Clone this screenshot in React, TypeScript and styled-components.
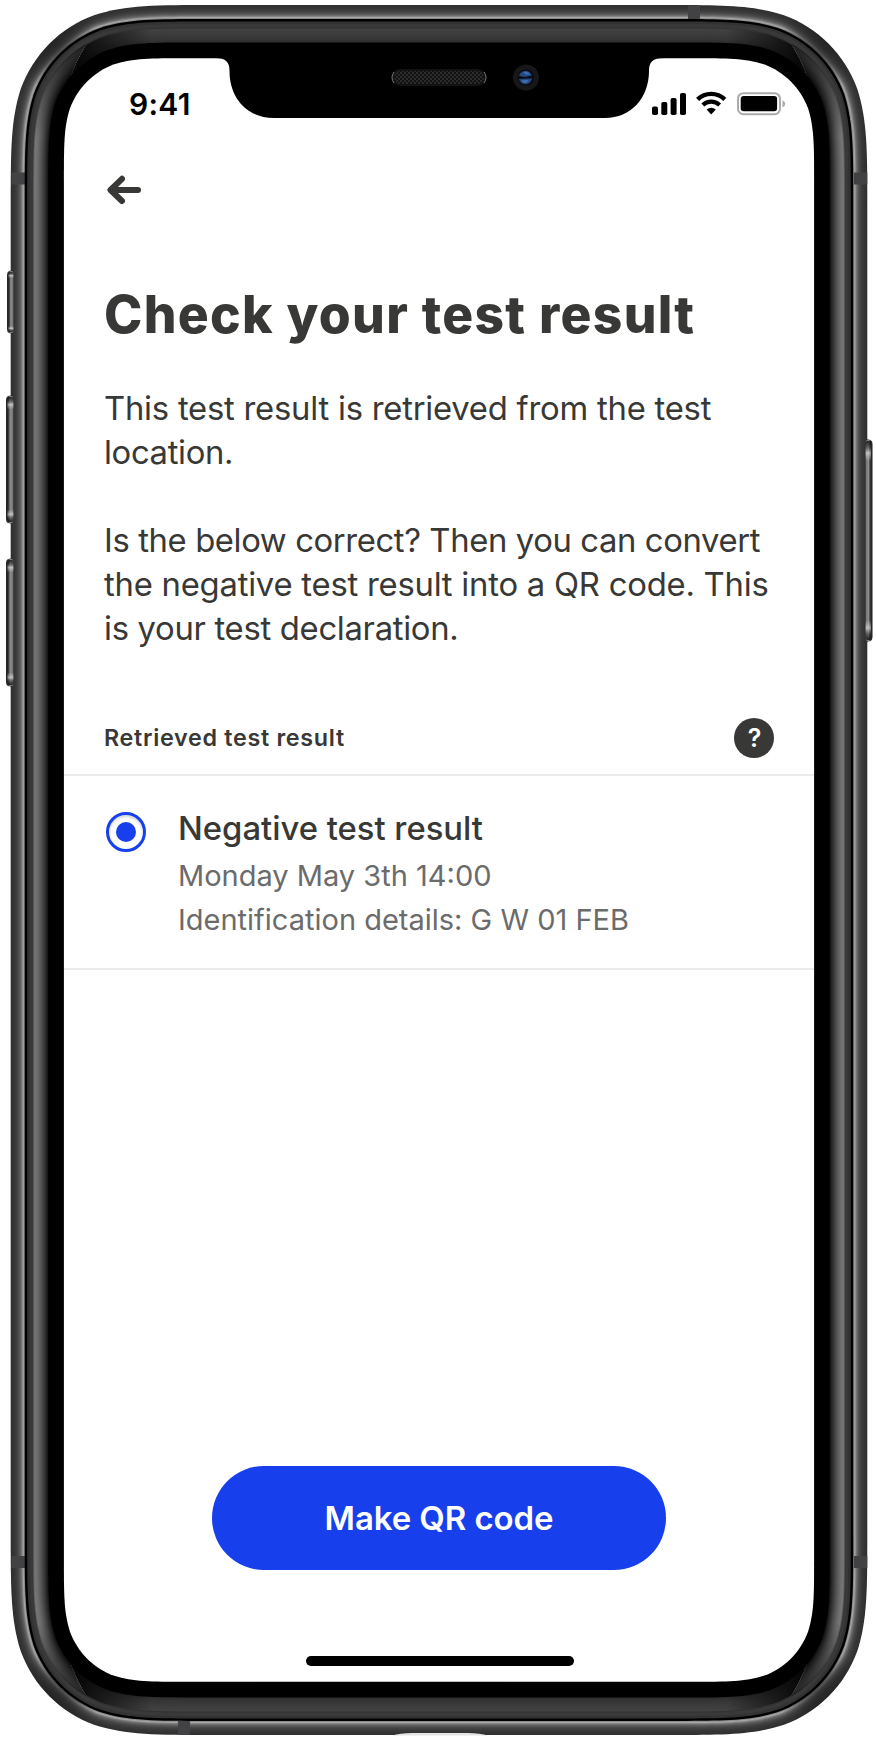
import React from "react";
import styled, { createGlobalStyle } from "styled-components";

const Global = createGlobalStyle`
  * { box-sizing: border-box; }
  body { margin: 0; background: #fff; font-family: Inter, "Liberation Sans", sans-serif; }
`;

const Device = styled.main`
  position: relative;
  width: 876px;
  height: 1740px;
  padding: 58px 62px 58px 64px;
  overflow: hidden;
`;

const FrameArt = styled.svg`
  position: absolute;
  inset: 0;
`;

const Screen = styled.div`
  position: relative;
  width: 750px;
  height: 1624px;
  display: flex;
  flex-direction: column;
`;

const StatusBar = styled.header`
  display: flex;
  justify-content: space-between;
  height: 88px;
  padding: 28px 28px 0 65px;
`;

const Clock = styled.time`
  font-size: 30px;
  font-weight: 600;
  line-height: 37px;
  letter-spacing: 0.3px;
  color: #000;
`;

const StatusIcons = styled.svg`
  display: block;
  margin-top: 4px;
`;

const NavBar = styled.nav`
  height: 88px;
  padding: 28px 0 0 42px;
`;

const BackButton = styled.button`
  display: block;
  padding: 0;
  border: 0;
  background: none;
`;

const Title = styled.h1`
  margin: 48px 0 0 40px;
  font-size: 51.6px;
  line-height: 64px;
  font-weight: 800;
  letter-spacing: 1.3px;
  color: #383836;
  white-space: nowrap;
`;

const Copy = styled.div`
  margin: 40px 0 0 40px;
  height: 264px;
`;

const Line = styled.span<{ $spacing: number }>`
  display: block;
  font-size: 32.8px;
  line-height: 44px;
  letter-spacing: ${(p) => p.$spacing}px;
  color: #383836;
  white-space: nowrap;
`;

const Gap = styled.div`
  height: 44px;
`;

const SectionHeader = styled.div`
  display: flex;
  align-items: center;
  justify-content: space-between;
  height: 76px;
  margin-top: 50px;
  padding: 2px 40px 0;
  border-bottom: 2px solid #ebebeb;
`;

const SectionLabel = styled.h2`
  margin: 0;
  font-size: 23.3px;
  line-height: 32px;
  font-weight: 600;
  letter-spacing: 0.7px;
  color: #383836;
`;

const ResultRow = styled.label`
  display: flex;
  height: 194px;
  padding: 31px 0 0 42px;
  border-bottom: 2px solid #ebebeb;
`;

const Radio = styled.span`
  display: flex;
  align-items: center;
  justify-content: center;
  width: 40px;
  height: 40px;
  margin: 5px 32px 0 0;
  border: 3px solid #173fec;
  border-radius: 50%;
  box-shadow: inset 0 2px 3px rgba(0, 0, 0, 0.18);

  &::after {
    content: "";
    width: 20px;
    height: 20px;
    border-radius: 50%;
    background: #173fec;
  }
`;

const ResultName = styled.strong`
  display: block;
  margin-bottom: 5px;
  font-size: 32.8px;
  line-height: 42px;
  font-weight: 500;
  letter-spacing: 0px;
  color: #383836;
`;

const Detail = styled.span`
  display: block;
  font-size: 29px;
  line-height: 44px;
  color: #6b6b6b;
  white-space: nowrap;
`;

const Footer = styled.footer`
  display: flex;
  flex: 1;
  flex-direction: column;
  align-items: center;
  justify-content: flex-end;
  padding-bottom: 16px;
`;

const PrimaryButton = styled.button`
  width: 454px;
  height: 104px;
  margin-bottom: 86px;
  padding: 0;
  border: 0;
  border-radius: 52px;
  background: #173fec;
  color: #fff;
  font: 600 33px/44px Inter, sans-serif;
  letter-spacing: -0.1px;
`;

const HomeIndicator = styled.div`
  width: 268px;
  height: 10px;
  margin-left: 2px;
  border-radius: 5px;
  background: #000;
`;

const LEFT = 10.7;
const TOP = 5;
const RIGHT = 867.3;
const BOTTOM = 1735;
const RADIUS = 133;

// Continuous-curvature rounded rectangle, inset from the outer edge of the casing.
function casing(inset: number) {
  const l = LEFT + inset;
  const t = TOP + inset;
  const r = RIGHT - inset;
  const b = BOTTOM - inset;
  const k = RADIUS - inset;
  const [s, c1, c2, m1, m2, n1, n2] = [1.5287, 1.0885, 0.8684, 0.0749, 0.6315, 0.1691, 0.3728].map((v) => v * k);
  return [
    `M${l + s} ${t} H${r - s}`,
    `C${r - c1} ${t} ${r - c2} ${t} ${r - m2} ${t + m1}`,
    `C${r - n2} ${t + n1} ${r - n1} ${t + n2} ${r - m1} ${t + m2}`,
    `C${r} ${t + c2} ${r} ${t + c1} ${r} ${t + s}`,
    `V${b - s}`,
    `C${r} ${b - c1} ${r} ${b - c2} ${r - m1} ${b - m2}`,
    `C${r - n1} ${b - n2} ${r - n2} ${b - n1} ${r - m2} ${b - m1}`,
    `C${r - c2} ${b} ${r - c1} ${b} ${r - s} ${b}`,
    `H${l + s}`,
    `C${l + c1} ${b} ${l + c2} ${b} ${l + m2} ${b - m1}`,
    `C${l + n2} ${b - n1} ${l + n1} ${b - n2} ${l + m1} ${b - m2}`,
    `C${l} ${b - c2} ${l} ${b - c1} ${l} ${b - s}`,
    `V${t + s}`,
    `C${l} ${t + c1} ${l} ${t + c2} ${l + m1} ${t + m2}`,
    `C${l + n1} ${t + n2} ${l + n2} ${t + n1} ${l + m2} ${t + m1}`,
    `C${l + c2} ${t} ${l + c1} ${t} ${l + s} ${t} Z`,
  ].join(" ");
}

const METAL = [48, 50, 52, 54, 57, 61, 66, 73, 82, 94, 110, 134, 166, 140];
const SIDE = [98, 118, 116, 112, 107, 101, 94, 87, 79, 71, 62, 53, 44, 34, 22];
const CAP = [50, 66, 65, 64, 63, 62, 61, 60, 58, 57, 55, 54, 52, 50, 46];
const grey = (v: number) => `rgb(${v},${v},${v})`;

const ANTENNAS = [
  [178, 1721, 12, 14],
  [688, 5.5, 12, 14.5],
  [11.5, 172.5, 14, 12],
  [854, 172.5, 13.3, 12],
  [11.5, 1556, 14, 12],
  [854, 1556, 13.3, 12],
];

const KEYS = [
  { x: 7, y: 269, w: 7, h: 66, right: false },
  { x: 6, y: 394, w: 8, h: 131, right: false },
  { x: 6, y: 557, w: 8, h: 131, right: false },
  { x: 865, y: 438, w: 7.5, h: 205, right: true },
];

function Casing() {
  return (
    <FrameArt width="876" height="1740" viewBox="0 0 876 1740" aria-hidden="true">
      <defs>
        <linearGradient id="key" x1="0" x2="1" y1="0" y2="0">
          <stop offset="0" stopColor="#1c1c1c" />
          <stop offset="0.25" stopColor="#444" />
          <stop offset="0.45" stopColor="#8c8c8c" />
          <stop offset="0.8" stopColor="#777" />
          <stop offset="1" stopColor="#222" />
        </linearGradient>
        <linearGradient id="keyEnds" x1="0" x2="0" y1="0" y2="1">
          <stop offset="0" stopColor="#000" stopOpacity="0.75" />
          <stop offset="0.03" stopColor="#222" stopOpacity="0.4" />
          <stop offset="0.06" stopColor="#fff" stopOpacity="0.5" />
          <stop offset="0.1" stopColor="#fff" stopOpacity="0" />
          <stop offset="0.9" stopColor="#fff" stopOpacity="0" />
          <stop offset="0.94" stopColor="#fff" stopOpacity="0.5" />
          <stop offset="0.97" stopColor="#222" stopOpacity="0.4" />
          <stop offset="1" stopColor="#000" stopOpacity="0.75" />
        </linearGradient>
        <linearGradient id="sideShade" x1="0" x2="0" y1="36" y2="1705" gradientUnits="userSpaceOnUse">
          <stop offset="0" stopColor="#000" stopOpacity="0.8" />
          <stop offset="0.06" stopColor="#000" stopOpacity="0" />
          <stop offset="0.95" stopColor="#000" stopOpacity="0" />
          <stop offset="1" stopColor="#000" stopOpacity="0.8" />
        </linearGradient>
        <linearGradient id="capShade" x1="80" x2="798" y1="0" y2="0" gradientUnits="userSpaceOnUse">
          <stop offset="0" stopColor="#000" stopOpacity="0.85" />
          <stop offset="0.1" stopColor="#000" stopOpacity="0" />
          <stop offset="0.9" stopColor="#000" stopOpacity="0" />
          <stop offset="1" stopColor="#000" stopOpacity="0.85" />
        </linearGradient>
        <radialGradient id="cornerShade">
          <stop offset="0" stopColor="#222" stopOpacity="0.8" />
          <stop offset="0.5" stopColor="#222" stopOpacity="0.5" />
          <stop offset="1" stopColor="#222" stopOpacity="0" />
        </radialGradient>
        <pattern id="mesh" width="4" height="4" patternUnits="userSpaceOnUse">
          <path d="M0 0h2v2h-2z M2 2h2v2h-2z" fill="#2b2b2b" />
        </pattern>
        <clipPath id="metalClip"><path d={casing(0)} /></clipPath>
        <clipPath id="sides">
          <path d="M0 0 L94 34 C70 64 54 110 54 200 V1540 C54 1630 70 1676 94 1706 L0 1740 Z M876 0 L784 34 C808 64 824 110 824 200 V1540 C824 1630 808 1676 784 1706 L876 1740 Z" />
        </clipPath>
      </defs>

      {KEYS.map((k) => (
        <g key={k.y} transform={k.right ? `translate(${k.x * 2 + k.w} 0) scale(-1 1)` : undefined}>
          <path d={`M${k.x + k.w} ${k.y} L${k.x + 2} ${k.y + 2} Q${k.x} ${k.y + 3} ${k.x} ${k.y + 6} V${k.y + k.h - 6} Q${k.x} ${k.y + k.h - 3} ${k.x + 2} ${k.y + k.h - 2} L${k.x + k.w} ${k.y + k.h} Z`} fill="url(#key)" />
        </g>
      ))}

      {METAL.map((v, i) => <path key={i} d={casing(i)} fill={grey(v)} />)}
      <g clipPath="url(#metalClip)">
        {[[52, 42], [826, 42], [52, 1698], [826, 1698]].map(([x, y]) => (
          <circle key={`${x}-${y}`} cx={x} cy={y} r="46" fill="url(#cornerShade)" />
        ))}
      </g>
      {ANTENNAS.map(([x, y, w, h]) => <rect key={`${x}-${y}`} x={x} y={y} width={w} height={h} fill="#424244" />)}
      <path d="M392 1735.5 Q400 1733 412 1733 H468 Q480 1733 488 1735.5 Z" fill="#e4e4e4" />
      {KEYS.map((k) => (
        <g key={k.y} transform={k.right ? `translate(${k.x * 2 + k.w} 0) scale(-1 1)` : undefined}>
          <rect x={k.x + 1} y={k.y + 2} width={k.w - 1} height={k.h - 4} rx="3" fill="url(#key)" />
          <rect x={k.x + 1.5} y={k.y + 3} width={k.w - 2} height={k.h - 6} rx="2" fill="url(#keyEnds)" />
        </g>
      ))}
      <path d={casing(14)} fill="#000" />
      <path d={casing(16.5)} fill="#323232" />
      <path d={casing(19)} fill="#393939" />
      {CAP.map((v, i) => <path key={i} d={casing(22.5 + i)} fill={grey(v)} />)}
      <path d={casing(23.5)} fill="url(#capShade)" />
      <g clipPath="url(#sides)">
        {SIDE.map((v, i) => <path key={i} d={casing(22.5 + i)} fill={grey(v)} />)}
        <path d={casing(22.5)} fill="url(#sideShade)" />
      </g>
      <path d={casing(37.5)} fill="#000" />
      <path d={casing(53.2)} fill="#fff" />
      <path d="M215 57 V58 C226 58 229.5 62 229.5 71 C229.5 98 247 118 274 118 H605 C631 118 649 98 649 71 C649 62 652.5 58 664 58 V57 Z" fill="#000" />

      <rect x="391.5" y="69" width="95" height="17" rx="8.5" fill="#121212" />
      <rect x="394" y="71" width="90" height="13" rx="6.5" fill="url(#mesh)" />
      <path d="M394 72 Q390 77.5 394 83 M484 72 Q488 77.5 484 83" stroke="#777" fill="none" />
      <circle cx="526" cy="77.5" r="13" fill="#171719" />
      <circle cx="526" cy="77.5" r="8" fill="#090a10" />
      <circle cx="525.5" cy="77.5" r="6.7" fill="#24487f" />
      <path d="M518.5 76 L525 77 L532.5 75.5 V78.5 H526 L518.5 79 Z" fill="#080b14" />
      <path d="M521 81 Q524 79 529 80.5 Q527 83.5 524 83 Z M523 72.5 Q527 70.5 530 74 Q526 76 523 72.5 Z" fill="#3e6cae" />
    </FrameArt>
  );
}

export default function App() {
  return (
    <>
      <Global />
      <Device>
        <Casing />
        <Screen>
          <StatusBar>
            <Clock>9:41</Clock>
            <StatusIcons width="134" height="28" viewBox="0 0 134 28" aria-label="Signal, Wi-Fi and battery">
              <rect x="0" y="16.5" width="6" height="8.5" rx="1.8" />
              <rect x="9.3" y="12" width="6" height="13" rx="1.8" />
              <rect x="18.6" y="8" width="6" height="17" rx="1.8" />
              <rect x="28" y="3" width="6" height="22" rx="1.8" />
              <path d="M45.6 9.4 A19.5 19.5 0 0 1 72.8 9.4" fill="none" stroke="#000" strokeWidth="4.4" />
              <path d="M50.8 15 A12.3 12.3 0 0 1 67.6 15" fill="none" stroke="#000" strokeWidth="4.2" />
              <path d="M54.6 19.4 Q59.2 16 63.8 19.4 L59.2 24.6 Z" />
              <rect x="86" y="3.2" width="42" height="21" rx="5.5" fill="none" stroke="#aaa" strokeWidth="2" />
              <rect x="88.7" y="6" width="36.4" height="15.3" rx="3" />
              <path d="M130.5 10.2 Q133.2 11.2 133.2 13.8 Q133.2 16.4 130.5 17.5 Z" fill="#aaa" />
            </StatusIcons>
          </StatusBar>
          <NavBar>
            <BackButton aria-label="Back">
              <svg width="36" height="32" viewBox="0 0 36 32" fill="none" stroke="#383836" strokeWidth="6" strokeLinecap="round" strokeLinejoin="round">
                <path d="M32 16 H5 M16 4.8 L4.5 16 L16 27" />
              </svg>
            </BackButton>
          </NavBar>
          <Title>Check your test result</Title>
          <Copy>
            <Line $spacing={-0.23}>This test result is retrieved from the test</Line>
            <Line $spacing={-0.35}>location.</Line>
            <Gap />
            <Line $spacing={-0.38}>Is the below correct? Then you can convert</Line>
            <Line $spacing={-0.23}>the negative test result into a QR code. This</Line>
            <Line $spacing={-0.3}>is your test declaration.</Line>
          </Copy>
          <SectionHeader>
            <SectionLabel>Retrieved test result</SectionLabel>
            <svg width="40" height="40" viewBox="0 0 40 40" aria-label="Help">
              <circle cx="20" cy="20" r="20" fill="#383836" />
              <text x="20.5" y="29" textAnchor="middle" fill="#fff" fontFamily="Inter, sans-serif" fontSize="25" fontWeight="600">?</text>
            </svg>
          </SectionHeader>
          <ResultRow>
            <Radio />
            <div>
              <ResultName>Negative test result</ResultName>
              <Detail>Monday May 3th 14:00</Detail>
              <Detail>Identification details: G W 01 FEB</Detail>
            </div>
          </ResultRow>
          <Footer>
            <PrimaryButton>Make QR code</PrimaryButton>
            <HomeIndicator />
          </Footer>
        </Screen>
      </Device>
    </>
  );
}
